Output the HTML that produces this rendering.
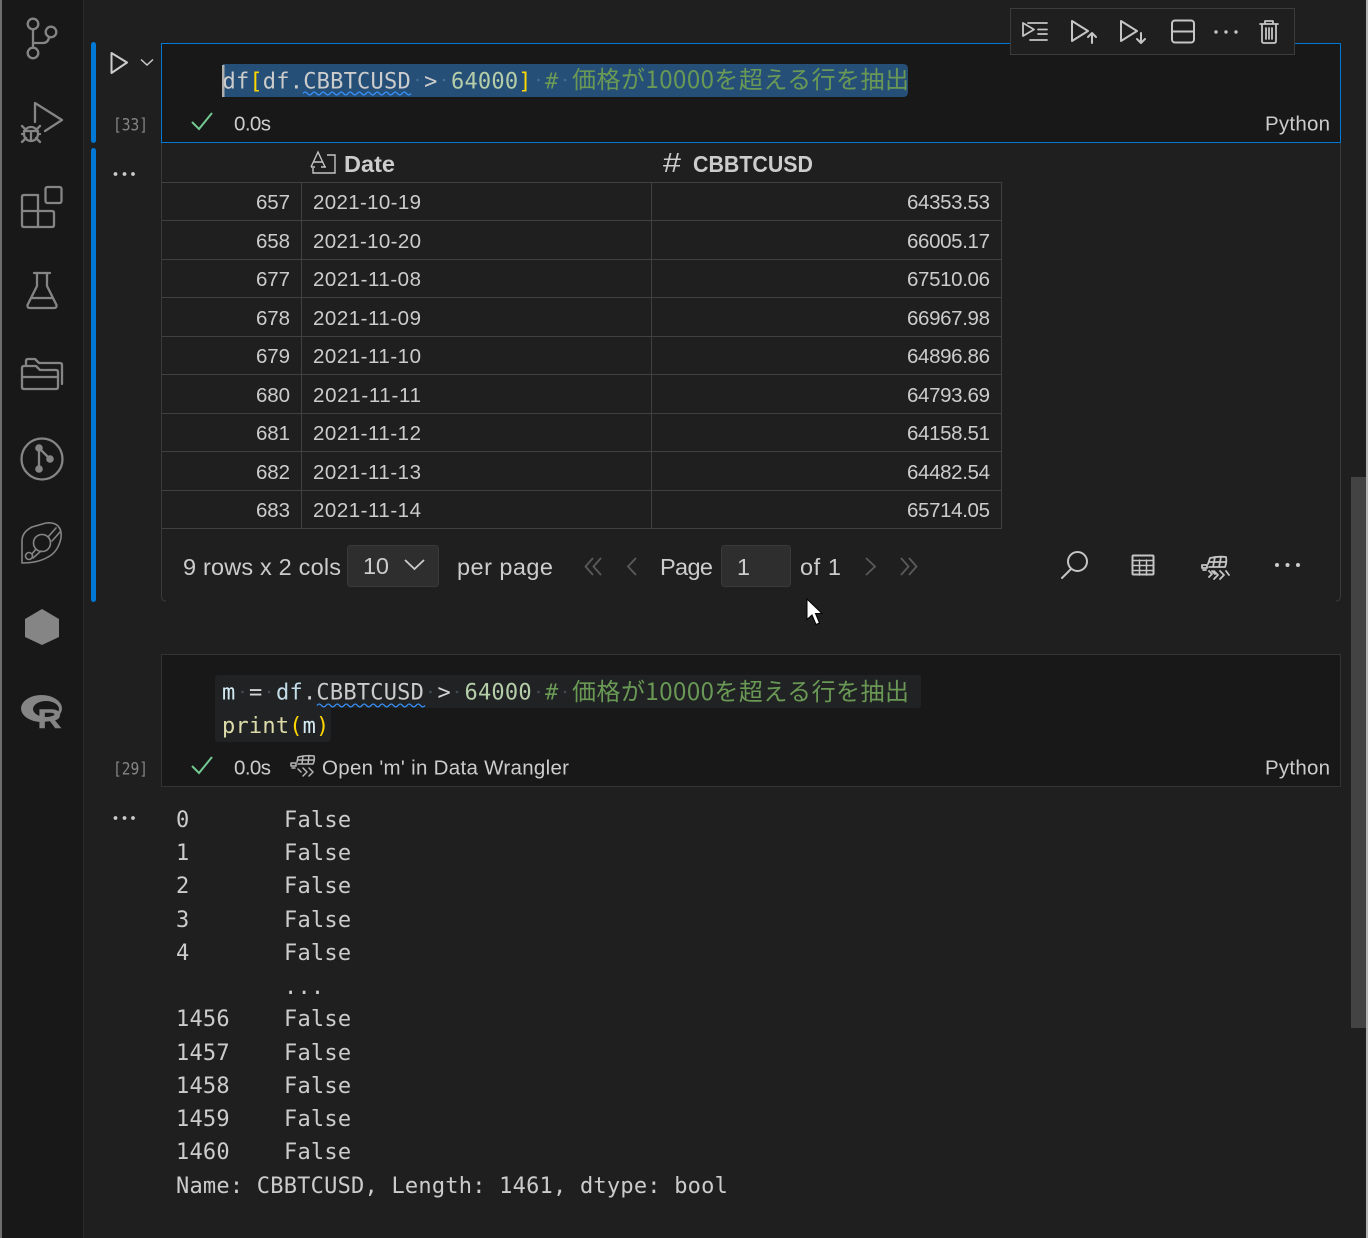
<!DOCTYPE html>
<html><head><meta charset="utf-8"><title>Notebook</title>
<style>
html,body{margin:0;padding:0;background:#1f1f1f;width:1368px;height:1238px;overflow:hidden}
svg{display:block}
.s{font-family:"Liberation Sans","Noto Sans CJK JP",sans-serif;fill:#cccccc}
.t{font-size:20.5px}
.f{font-size:23.5px}
.h{font-size:23px;font-weight:bold;fill:#cccccc}
.m{font-family:"DejaVu Sans Mono","Liberation Mono","Noto Sans CJK JP",monospace;font-size:22px;letter-spacing:.22px;fill:#cccccc}
.j{font-family:"Noto Sans CJK JP",sans-serif;font-size:24px;fill:#6a9955}
.a{fill:none;stroke:#858585;stroke-width:2.300;stroke-linejoin:round;stroke-linecap:round}
.b{fill:none;stroke:#c5c5c5;stroke-width:2;stroke-linejoin:round;stroke-linecap:round}
.g{fill:none;stroke:#5a5a5a;stroke-width:1.8}
.l{stroke:#404040;stroke-width:1;fill:none}
</style></head><body>
<svg width="1368" height="1238" viewBox="0 0 1368 1238" xmlns="http://www.w3.org/2000/svg">
<rect width="1368" height="1238" fill="#1f1f1f"/>
<rect x="0" y="0" width="2" height="1238" fill="#6e6e6e"/>
<rect x="2" y="0" width="81" height="1238" fill="#181818"/>
<rect x="83" y="0" width="1" height="1238" fill="#2b2b2b"/>
<rect x="1366" y="0" width="2" height="1238" fill="#b4b4b4"/>
<rect x="1351" y="477" width="15" height="551" fill="#434343"/>

<!-- activity bar -->
<g class="a">
<circle cx="33" cy="24" r="5.3"/><circle cx="33" cy="53" r="5.3"/><circle cx="51" cy="32" r="5.3"/>
<path d="M33 29.5V47.5M33 43H43Q48 43 49 37.5"/>
<path d="M35 122V103L62 120L45 131"/>
<circle cx="31" cy="134" r="7"/><path d="M24 131H38M31 131V141M22 126L26 130M40 126L36 130M22 134H24M38 134H40M22 142L26 138M40 142L36 138"/>
<rect x="45.500" y="187" width="16" height="16" rx="2"/>
<path d="M38 195H24Q22 195 22 197V225Q22 227 24 227H52Q54 227 54 225V213Q54 211 52 211H22M38 195V227"/>
<path d="M34 273H50M37 273V286L27.500 305Q27 308 30 308H54Q57 308 56.500 305L47 286V273M31 298H53"/>
<path d="M26 365V361Q26 359 28 359H35L39 363H60Q62 363 62 365V384"/>
<path d="M24 366H36L40 370H56Q58 370 58 372V387Q58 389 56 389H24Q22 389 22 387V368Q22 366 24 366ZM22 377H58"/>
<circle cx="42" cy="459" r="20.500"/>
<path d="M39 448V469M39 448L50 459"/>
<path d="M22 563V541Q22 532 32 527L46 523Q54 522 58 526Q62 530 61 538Q58 552 48 557Q38 563 22 563Z" stroke-width="1.600"/>
<circle cx="42" cy="543" r="8.500" stroke-width="1.600"/><path d="M48 537L56 528M52 541L60 532" stroke-width="1.600"/>
<circle cx="29" cy="556" r="3.500" stroke-width="1.600"/><path d="M32 554L36 549M33 558L41 551" stroke-width="1.600"/>
</g>
<g fill="#858585">
<circle cx="39" cy="448" r="3.800"/><circle cx="50" cy="459" r="3.800"/><circle cx="39" cy="469" r="3.800"/>
<polygon points="42,609 59,619 59,637 42,645 25,637 25,619"/>
</g>
<path fill-rule="evenodd" d="M21 708.500A20.500 13.500 0 0 1 62 708.500A20.500 13.500 0 0 1 21 708.500ZM33 709A13 8 0 0 0 59 709A13 8 0 0 0 33 709Z" fill="#858585"/>
<text x="37.500" y="728" font-family="Liberation Sans" font-weight="bold" font-size="27" fill="#858585" stroke="#858585" stroke-width=".5" textLength="24" lengthAdjust="spacingAndGlyphs">R</text>

<!-- blue bars -->
<rect x="91" y="42" width="5" height="101" rx="2.500" fill="#0078d4"/>
<rect x="91" y="148" width="5" height="454" rx="2.500" fill="#0078d4"/>

<!-- gutter -->
<path d="M111.500 53V73L127 62.500Z" fill="none" stroke="#cccccc" stroke-width="2" stroke-linejoin="round"/>
<path d="M141 59.500L147 65L153 59.500" fill="none" stroke="#cccccc" stroke-width="1.500"/>
<text class="m" x="113" y="130.500" style="font-size:17px;letter-spacing:0;fill:#858585" textLength="35" lengthAdjust="spacingAndGlyphs">[33]</text>
<text class="m" x="113" y="774.500" style="font-size:17px;letter-spacing:0;fill:#858585" textLength="35" lengthAdjust="spacingAndGlyphs">[29]</text>
<g fill="#cccccc"><circle cx="115.500" cy="174" r="1.900"/><circle cx="124.500" cy="174" r="1.900"/><circle cx="133" cy="174" r="1.900"/>
<circle cx="115.500" cy="818" r="1.900"/><circle cx="124.500" cy="818" r="1.900"/><circle cx="133" cy="818" r="1.900"/></g>

<!-- output frame cell 1 -->
<path d="M161.500 142V596Q161.500 601 166 601M1340.500 142V596Q1340.500 601 1336 601" fill="none" stroke="#3a3a3a"/>
<path class="l" d="M162 182.500H1001.500V528.500H162M162 220.500H1001M162 259.500H1001M162 297.500H1001M162 336.500H1001M162 374.500H1001M162 413.500H1001M162 451.500H1001M162 490.500H1001M301.500 183V528M651.500 183V528"/>

<!-- cell 1 editor -->
<rect x="161.500" y="43.500" width="1179" height="99" fill="#181818" stroke="#0078d4"/>
<path d="M223 64H903Q908 64 908 69V92Q908 97 903 97H223Z" fill="#264f78"/>
<rect x="222" y="65" width="2.500" height="32" fill="#aeafad"/>
<g fill="#4a6c8f"><circle cx="417.500" cy="80" r="1.300"/><circle cx="444" cy="80" r="1.300"/><circle cx="538.500" cy="80" r="1.300"/><circle cx="565" cy="80" r="1.300"/></g>
<text class="m" y="88.500"><tspan x="222.500">df</tspan><tspan x="249.400" fill="#ffd700">[</tspan><tspan x="262.800">df.CBBTCUSD</tspan><tspan x="424.100">&gt;</tspan><tspan x="451" fill="#b5cea8">64000</tspan><tspan x="518.200" fill="#ffd700">]</tspan><tspan x="545" fill="#6a9955">#</tspan></text>
<text class="j" y="88" x="572" textLength="337">価格が10000を超える行を抽出</text>
<path d="M303 93.500q2.250 -3 4.500 0t4.500 0t4.500 0t4.500 0t4.500 0t4.500 0t4.500 0t4.500 0t4.500 0t4.500 0t4.500 0t4.500 0t4.500 0t4.500 0t4.500 0t4.500 0t4.500 0t4.500 0t4.500 0t4.500 0t4.500 0t4.500 0t4.500 0t4.500 0" fill="none" stroke="#3794ff" stroke-width="1.300"/>
<path d="M192 122L199 129L212 113" fill="none" stroke="#73c991" stroke-width="2"/>
<text class="s t" x="234" y="130.500" textLength="37">0.0s</text>
<text class="s t" x="1265" y="130.500" textLength="65">Python</text>

<!-- toolbar -->
<rect x="1010.500" y="8.500" width="284" height="46" fill="#1f1f1f" stroke="#3c3c3c"/>
<g class="b">
<path d="M1023 23V36L1034 29.500ZM1028 23H1047M1038 29.500H1047M1038 34H1047M1030 40H1047" stroke-width="1.800"/>
<path d="M1072 21V41L1088 31Z M1092 43V33M1088 37L1092 33L1096 37"/>
<path d="M1121 21V41L1137 31Z M1141 33V43M1137 39L1141 43L1145 39"/>
<rect x="1172" y="20.500" width="22" height="22" rx="3"/><path d="M1172 31.500H1194"/>
<path d="M1260 24H1278M1265 24V21H1273V24M1262 24V41Q1262 43 1264 43H1274Q1276 43 1276 41V24M1266 28V39M1269 28V39M1272 28V39" stroke-width="1.800"/>
</g>
<g fill="#c5c5c5"><circle cx="1216" cy="32" r="1.700"/><circle cx="1226" cy="32" r="1.700"/><circle cx="1236" cy="32" r="1.700"/></g>

<!-- table header -->
<path d="M327 155H335V173H313V168M311 167L318 152L325 167M313.500 162H322.500M311 167H315M321 167H326" fill="none" stroke="#c5c5c5" stroke-width="1.400"/>
<text class="s h" x="344" y="172" textLength="51" lengthAdjust="spacingAndGlyphs">Date</text>
<text class="s" x="663" y="172" font-size="28" textLength="18" lengthAdjust="spacingAndGlyphs">#</text>
<text class="s h" x="693" y="172" textLength="120" lengthAdjust="spacingAndGlyphs">CBBTCUSD</text>

<!-- rows -->
<text class="s t" x="256" y="209" textLength="34">657</text><text class="s t" x="313" y="209" textLength="108">2021-10-19</text><text class="s t" x="907" y="209" textLength="83">64353.53</text>
<text class="s t" x="256" y="248" textLength="34">658</text><text class="s t" x="313" y="248" textLength="108">2021-10-20</text><text class="s t" x="907" y="248" textLength="83">66005.17</text>
<text class="s t" x="256" y="286" textLength="34">677</text><text class="s t" x="313" y="286" textLength="108">2021-11-08</text><text class="s t" x="907" y="286" textLength="83">67510.06</text>
<text class="s t" x="256" y="325" textLength="34">678</text><text class="s t" x="313" y="325" textLength="108">2021-11-09</text><text class="s t" x="907" y="325" textLength="83">66967.98</text>
<text class="s t" x="256" y="363" textLength="34">679</text><text class="s t" x="313" y="363" textLength="108">2021-11-10</text><text class="s t" x="907" y="363" textLength="83">64896.86</text>
<text class="s t" x="256" y="402" textLength="34">680</text><text class="s t" x="313" y="402" textLength="108">2021-11-11</text><text class="s t" x="907" y="402" textLength="83">64793.69</text>
<text class="s t" x="256" y="440" textLength="34">681</text><text class="s t" x="313" y="440" textLength="108">2021-11-12</text><text class="s t" x="907" y="440" textLength="83">64158.51</text>
<text class="s t" x="256" y="479" textLength="34">682</text><text class="s t" x="313" y="479" textLength="108">2021-11-13</text><text class="s t" x="907" y="479" textLength="83">64482.54</text>
<text class="s t" x="256" y="517" textLength="34">683</text><text class="s t" x="313" y="517" textLength="108">2021-11-14</text><text class="s t" x="907" y="517" textLength="83">65714.05</text>

<!-- footer -->
<text class="s f" x="183" y="575" textLength="158">9 rows x 2 cols</text>
<rect x="347.500" y="545.500" width="91" height="41" rx="3" fill="#2e2e2e" stroke="#3a3a3a"/>
<text class="s f" x="363" y="574" textLength="26">10</text>
<path d="M405 560L414.500 569L424 560" fill="none" stroke="#cccccc" stroke-width="1.800"/>
<text class="s f" x="457" y="575" textLength="96">per page</text>
<path class="g" d="M593 558L585.500 566.500L593 575M601 558L593.500 566.500L601 575"/>
<path class="g" d="M636 558L628 566.500L636 575"/>
<text class="s f" x="660" y="575" textLength="53">Page</text>
<rect x="721.500" y="545.500" width="69" height="41" rx="3" fill="#2e2e2e" stroke="#3a3a3a"/>
<text class="s f" x="737" y="575" textLength="13">1</text>
<text class="s f" x="800" y="575" textLength="41">of 1</text>
<path class="g" d="M866 558L875 566.500L866 575"/>
<path class="g" d="M901 558L908.500 566.500L901 575M909 558L916.500 566.500L909 575"/>
<g class="b">
<circle cx="1077.500" cy="561.500" r="9.500"/><path d="M1071 569L1062 578"/>
<rect x="1132.500" y="555.500" width="21" height="19" rx="1"/><path d="M1133 560.500H1153M1133 565.500H1153M1133 570.500H1153M1139.500 560V575M1146.500 560V575" stroke-width="1.500"/>
<path d="M1208 564L1210 558Q1218 556 1226 557Q1227 562 1225 567H1209M1209 562H1226M1215 557L1213 567M1221 557L1219 567" stroke-width="1.800"/>
<path d="M1202 565H1207V568H1202ZM1203 570H1206M1209 571L1212 574L1209 577M1212 571L1215 574M1214 571L1218 575L1214 579M1220 571L1224 575L1220 579M1226 571L1229 575" stroke-width="1.800"/>
</g>
<g fill="#cccccc"><circle cx="1277" cy="565" r="2"/><circle cx="1287.500" cy="565" r="2"/><circle cx="1298" cy="565" r="2"/></g>

<!-- cursor -->
<polygon points="807,599 807,619.500 812,615 816,624.500 819.500,623 815.500,613.500 822,613.500" fill="#ffffff" stroke="#000000" stroke-width="1"/>

<!-- cell 2 -->
<rect x="161.500" y="654.500" width="1179" height="132" fill="#181818" stroke="#333333"/>
<path d="M219 675H921V704Q921 708 917 708H331V738Q331 742 327 742H219Q215 742 215 738V679Q215 675 219 675Z" fill="#202224"/>
<g fill="#3f4a52"><circle cx="242.500" cy="692" r="1.300"/><circle cx="269" cy="692" r="1.300"/><circle cx="430.500" cy="692" r="1.300"/><circle cx="457" cy="692" r="1.300"/><circle cx="538.500" cy="692" r="1.300"/><circle cx="565" cy="692" r="1.300"/></g>
<text class="m" y="699.500"><tspan x="222" fill="#d6ecf5">m</tspan><tspan x="249" fill="#d4d4d4">=</tspan><tspan x="276" fill="#c3dde8">df</tspan><tspan x="303">.</tspan><tspan x="316.400">CBBTCUSD</tspan><tspan x="437.500" fill="#d4d4d4">&gt;</tspan><tspan x="464.500" fill="#b5cea8">64000</tspan><tspan x="545" fill="#6a9955">#</tspan></text>
<text class="j" y="700" x="572" textLength="337">価格が10000を超える行を抽出</text>
<path d="M317 705.500q2.250 -3 4.500 0t4.500 0t4.500 0t4.500 0t4.500 0t4.500 0t4.500 0t4.500 0t4.500 0t4.500 0t4.500 0t4.500 0t4.500 0t4.500 0t4.500 0t4.500 0t4.500 0t4.500 0t4.500 0t4.500 0t4.500 0t4.500 0t4.500 0t4.500 0" fill="none" stroke="#3794ff" stroke-width="1.300"/>
<text class="m" y="733"><tspan x="222" fill="#dcdcaa">print</tspan><tspan x="289.200" fill="#ffd700">(</tspan><tspan x="302.600" fill="#d6ecf5">m</tspan><tspan x="316" fill="#ffd700">)</tspan></text>
<path d="M192 766L199 773L212 757" fill="none" stroke="#73c991" stroke-width="2"/>
<text class="s t" x="234" y="774.500" textLength="37">0.0s</text>
<g class="b" style="stroke:#b8b8b8">
<path d="M297 762L298 757Q306 755 314 756Q315 760 313 764H298M298 760H314M303 756L302 764M309 756L308 764" stroke-width="1.500"/>
<path d="M291 763H296V766H291ZM292 768H295M298 769L301 772M303 768L307 772L303 776M309 768L313 772L309 776" stroke-width="1.500"/>
</g>
<text class="s t" x="322" y="774.500" textLength="247">Open 'm' in Data Wrangler</text>
<text class="s t" x="1265" y="774.500" textLength="65">Python</text>

<!-- text output -->
<text class="m" x="176" y="827">0<tspan x="284">False</tspan></text>
<text class="m" x="176" y="860">1<tspan x="284">False</tspan></text>
<text class="m" x="176" y="893">2<tspan x="284">False</tspan></text>
<text class="m" x="176" y="927">3<tspan x="284">False</tspan></text>
<text class="m" x="176" y="960">4<tspan x="284">False</tspan></text>
<text class="m" x="284" y="994">...</text>
<text class="m" x="176" y="1026">1456<tspan x="284">False</tspan></text>
<text class="m" x="176" y="1060">1457<tspan x="284">False</tspan></text>
<text class="m" x="176" y="1093">1458<tspan x="284">False</tspan></text>
<text class="m" x="176" y="1126">1459<tspan x="284">False</tspan></text>
<text class="m" x="176" y="1159">1460<tspan x="284">False</tspan></text>
<text class="m" x="176" y="1193">Name: CBBTCUSD, Length: 1461, dtype: bool</text>
</svg>
</body></html>
